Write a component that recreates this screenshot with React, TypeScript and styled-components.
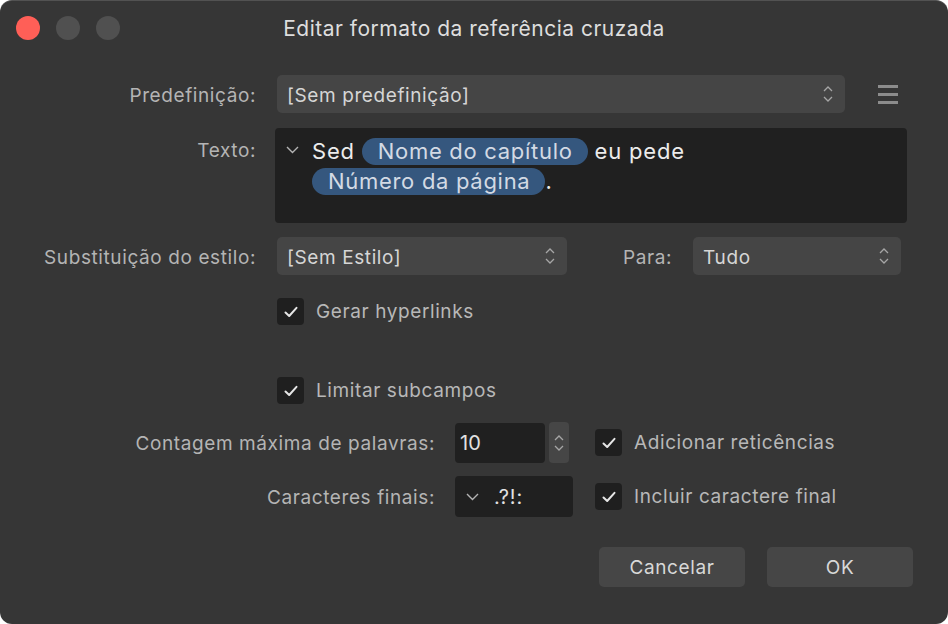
import React from "react";
import styled, { createGlobalStyle } from "styled-components";

const GlobalStyle = createGlobalStyle`
	html, body {
		margin: 0;
		padding: 0;
		background: #ffffff;
	}
	body {
		font-family: Inter, "Noto Sans", "Liberation Sans", sans-serif;
		-webkit-font-smoothing: antialiased;
	}
`;

const UpDown = () => (
	<svg width="10" height="18" viewBox="0 0 10 18" fill="none">
		<path d="M1 6 L5 2 L9 6" stroke="#a6a6a6" strokeWidth="1.3" />
		<path d="M1 12 L5 16 L9 12" stroke="#a6a6a6" strokeWidth="1.3" />
	</svg>
);

const Check = () => (
	<svg width="14" height="12" viewBox="0 0 14 12" fill="none">
		<path d="M1.5 6.5 L5.2 10 L12.5 1.8" stroke="#e6e6e6" strokeWidth="2" strokeLinecap="round" strokeLinejoin="round" />
	</svg>
);

const Chevron = () => (
	<svg width="13" height="8" viewBox="0 0 13 8" fill="none">
		<path d="M1 1 L6.5 6.5 L12 1" stroke="#b4b4b4" strokeWidth="1.4" />
	</svg>
);

const App = () => {
	return (
		<>
			<GlobalStyle />
			<Window>
				<TitleBar>
					<Lights>
						<Light color="#ff5f57" />
						<Light color="#505050" />
						<Light color="#505050" />
					</Lights>
					<Title>Editar formato da referência cruzada</Title>
					<span />
				</TitleBar>

				<Body>
					<Row style={{ height: 38 }}>
						<Label>Predefinição:</Label>
						<Select width={568}>
							<span>[Sem predefinição]</span>
							<UpDown />
						</Select>
						<MenuIcon>
							<i />
							<i />
							<i />
						</MenuIcon>
					</Row>

					<Row top={15} align="flex-start">
						<Label $pad={11}>Texto:</Label>
						<TextBox>
							<TextLine>
								<Toggle>
									<Chevron />
								</Toggle>
								Sed <Token>Nome do capítulo</Token> eu pede
							</TextLine>
							<TextLine>
								<Token>Número da página</Token>.
							</TextLine>
						</TextBox>
					</Row>

					<Row top={14} style={{ height: 38 }}>
						<Label>Substituição do estilo:</Label>
						<Select width={290}>
							<span>[Sem Estilo]</span>
							<UpDown />
						</Select>
						<SideLabel>Para:</SideLabel>
						<Select width={208}>
							<span>Tudo</span>
							<UpDown />
						</Select>
					</Row>

					<Row top={23}>
						<Label />
						<CheckRow>
							<Box>
								<Check />
							</Box>
							Gerar hyperlinks
						</CheckRow>
					</Row>

					<Row top={52}>
						<Label />
						<CheckRow>
							<Box>
								<Check />
							</Box>
							Limitar subcampos
						</CheckRow>
					</Row>

					<Grid>
						<WideLabel>Contagem máxima de palavras:</WideLabel>
						<Field>
							<NumberInput>10</NumberInput>
							<Stepper>
								<UpDown />
							</Stepper>
						</Field>
						<CheckRow>
							<Box>
								<Check />
							</Box>
							Adicionar reticências
						</CheckRow>

						<WideLabel>Caracteres finais:</WideLabel>
						<Field>
							<EndInput>
								<Chevron />
								<span>.?!:</span>
							</EndInput>
						</Field>
						<CheckRow>
							<Box>
								<Check />
							</Box>
							Incluir caractere final
						</CheckRow>
					</Grid>

					<Buttons>
						<Button>Cancelar</Button>
						<Button>OK</Button>
					</Buttons>
				</Body>
			</Window>
		</>
	);
};

export default App;

const Window = styled.div`
	box-sizing: border-box;
	width: 948px;
	height: 624px;
	background: #363636;
	border-radius: 12px;
	box-shadow: inset 0 1px 0 rgba(255, 255, 255, 0.14);
	overflow: hidden;
	display: flex;
	flex-direction: column;
`;

const TitleBar = styled.div`
	height: 56px;
	display: grid;
	grid-template-columns: 1fr auto 1fr;
	align-items: center;
`;

const Lights = styled.div`
	display: flex;
	gap: 16px;
	padding-left: 16px;
`;

const Light = styled.span<{ color: string }>`
	width: 24px;
	height: 24px;
	border-radius: 50%;
	background: ${(p) => p.color};
`;

const Title = styled.div`
	font-size: 21px;
	letter-spacing: 0.5px;
	color: #dedede;
	padding-top: 1px;
`;

const Body = styled.div`
	display: flex;
	flex-direction: column;
	padding-top: 19px;
`;

const Row = styled.div<{ top?: number; align?: string }>`
	display: flex;
	align-items: ${(p) => p.align || "center"};
	margin-top: ${(p) => p.top || 0}px;
`;

const Label = styled.div<{ $pad?: number }>`
	width: 256px;
	flex-shrink: 0;
	margin-right: 21px;
	text-align: right;
	font-size: 19px;
	letter-spacing: 0.6px;
	color: #b4b4b4;
	padding-top: ${(p) => p.$pad ?? 2}px;
`;

const SideLabel = styled.div`
	font-size: 19px;
	letter-spacing: 0.6px;
	color: #b4b4b4;
	margin-left: 56px;
	margin-right: 21px;
	padding-top: 2px;
`;

const Select = styled.div<{ width: number }>`
	box-sizing: border-box;
	width: ${(p) => p.width}px;
	height: 38px;
	background: #454545;
	border-radius: 5px;
	display: flex;
	align-items: center;
	justify-content: space-between;
	padding: 2px 12px 0 10px;
	font-size: 19px;
	letter-spacing: 0.6px;
	color: #d6d6d6;
	svg {
		margin-top: -2px;
	}
`;

const MenuIcon = styled.div`
	display: flex;
	flex-direction: column;
	gap: 5px;
	margin-left: 33px;
	i {
		display: block;
		width: 20px;
		height: 3px;
		background: #8c8c8c;
	}
`;

const TextBox = styled.div`
	box-sizing: border-box;
	width: 632px;
	height: 95px;
	margin-left: -2px;
	background: #202020;
	border-radius: 4px;
	padding: 8px 0 0 37px;
	font-size: 22px;
	letter-spacing: 0.8px;
	color: #ececec;
`;

const TextLine = styled.div`
	position: relative;
	height: 30px;
	display: flex;
	align-items: center;
	white-space: pre;
`;

const Toggle = styled.span`
	position: absolute;
	left: -26px;
	top: 10px;
	display: flex;
`;

const Token = styled.span`
	display: inline-flex;
	align-items: center;
	height: 27px;
	padding: 0 15px 0 16px;
	border-radius: 14px;
	background: #35577e;
	color: #d3dae4;
	font-size: 22px;
	letter-spacing: 0.7px;
`;

const CheckRow = styled.div`
	display: flex;
	align-items: center;
	gap: 12px;
	font-size: 19px;
	letter-spacing: 0.6px;
	color: #b8b8b8;
`;

const Box = styled.span`
	width: 27px;
	height: 27px;
	border-radius: 4px;
	background: #1f1f1f;
	display: flex;
	align-items: center;
	justify-content: center;
`;

const Grid = styled.div`
	display: grid;
	grid-template-columns: 435px 120px auto;
	column-gap: 20px;
	row-gap: 13px;
	align-items: center;
	margin-top: 18px;
`;

const WideLabel = styled.div`
	text-align: right;
	font-size: 19px;
	letter-spacing: 0.6px;
	color: #b4b4b4;
	padding-top: 2px;
`;

const Field = styled.div`
	display: flex;
	gap: 4px;
	align-items: center;
`;

const NumberInput = styled.div`
	box-sizing: border-box;
	width: 90px;
	height: 40px;
	background: #202020;
	border-radius: 4px;
	display: flex;
	align-items: center;
	padding-left: 5px;
	font-size: 20px;
	color: #e2e2e2;
`;

const Stepper = styled.div`
	width: 20px;
	height: 41px;
	background: #464646;
	border-radius: 4px;
	display: flex;
	align-items: center;
	justify-content: center;
	svg {
		height: 30px;
	}
`;

const EndInput = styled.div`
	box-sizing: border-box;
	width: 118px;
	height: 41px;
	background: #202020;
	border-radius: 4px;
	display: flex;
	align-items: center;
	gap: 15px;
	padding-left: 11px;
	font-size: 20px;
	letter-spacing: 0.8px;
	color: #e2e2e2;
`;

const Buttons = styled.div`
	display: flex;
	justify-content: flex-end;
	gap: 22px;
	padding-right: 35px;
	margin-top: 30px;
`;

const Button = styled.div`
	width: 146px;
	height: 40px;
	background: #464646;
	border-radius: 5px;
	display: flex;
	align-items: center;
	justify-content: center;
	font-size: 19px;
	letter-spacing: 0.6px;
	color: #d8d8d8;
`;
